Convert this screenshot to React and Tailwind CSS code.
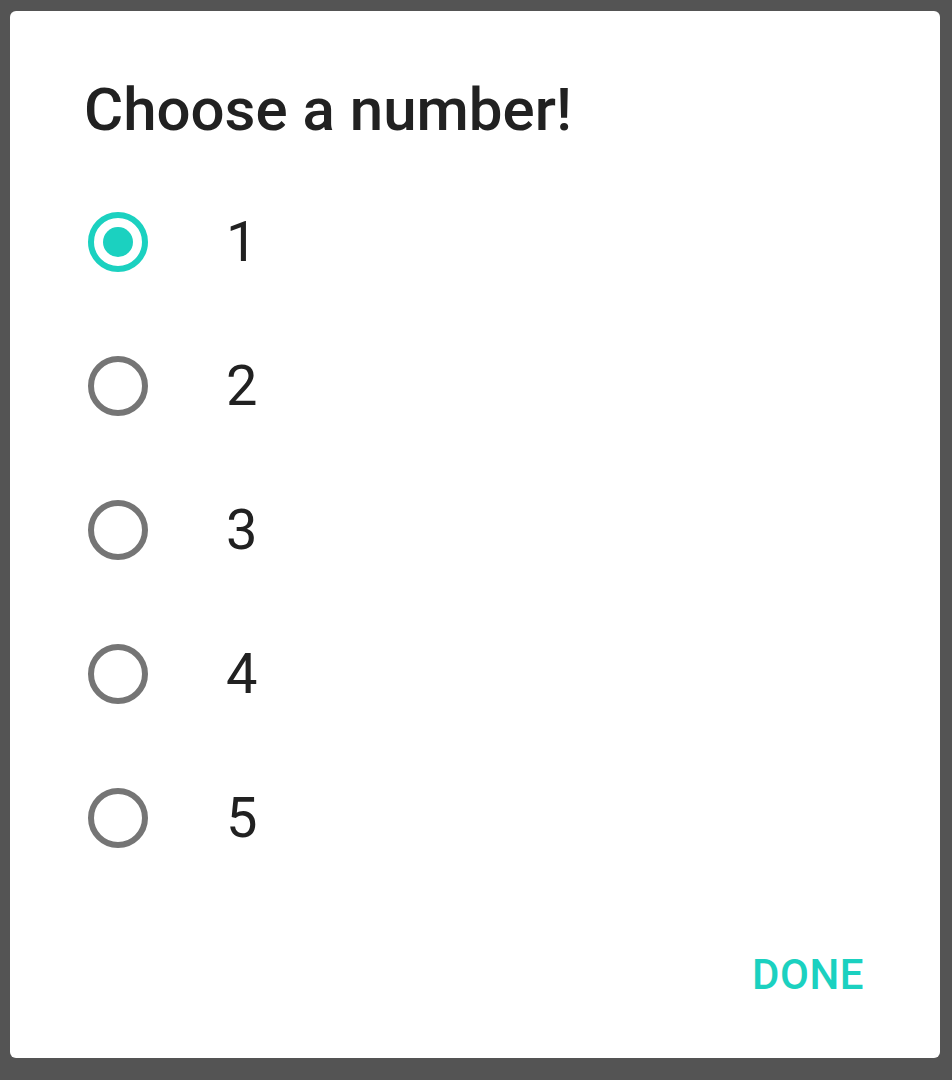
import React, { useState } from "react";

const options = [1, 2, 3, 4, 5];

const Radio = ({ checked }) => (
  <span
    className={`flex items-center justify-center w-[60px] h-[60px] rounded-full border-[6px] ${
      checked ? "border-[#1bd1c0]" : "border-[#757575]"
    }`}
  >
    {checked && <span className="w-[30px] h-[30px] rounded-full bg-[#1bd1c0]" />}
  </span>
);

const App = () => {
  const [value, setValue] = useState(1);

  return (
    <div
      className="w-[952px] h-[1080px] bg-[#545454] pt-[11px] pl-[10px]"
      style={{ fontFamily: "Roboto, 'Liberation Sans', sans-serif" }}
    >
      <div className="w-[930px] h-[1047px] bg-white rounded-[6px] flex flex-col">
        <h1 className="pl-[74px] pt-[67px] text-[60px] leading-[64px] font-medium text-[#212121]">
          Choose a number!
        </h1>
        <div className="flex flex-col mt-[28px]">
          {options.map((n) => (
            <button
              key={n}
              onClick={() => setValue(n)}
              className="flex items-center h-[144px] pl-[78px] text-left"
            >
              <Radio checked={value === n} />
              <span className="ml-[78px] text-[56px] text-[#212121]">{n}</span>
            </button>
          ))}
        </div>
        <div className="flex justify-end mt-auto pb-[52px] pr-[76px]">
          <button className="text-[42px] font-medium text-[#1bd1c0] tracking-[0.5px]">
            DONE
          </button>
        </div>
      </div>
    </div>
  );
};

export default App;
